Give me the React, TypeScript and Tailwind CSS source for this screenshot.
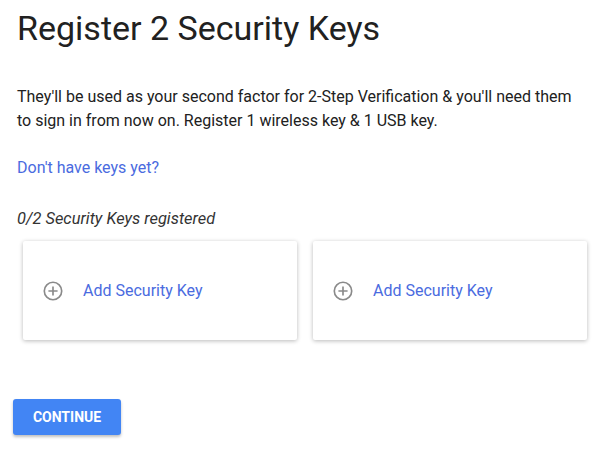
import React from "react";

function PlusCircle() {
  return (
    <svg width="22" height="22" viewBox="0 0 24 24" fill="none" stroke="#8a8a8a" strokeWidth="1.8">
      <circle cx="12" cy="12" r="9.5" />
      <path d="M12 7v10M7 12h10" />
    </svg>
  );
}

function KeyCard() {
  return (
    <button className="flex h-[99px] flex-1 items-center gap-[19px] rounded-[2px] bg-white pl-[19px] text-left shadow-[0_1px_4px_rgba(0,0,0,0.28)]">
      <PlusCircle />
      <span className="text-[16px] text-[#4a6be0]">Add Security Key</span>
    </button>
  );
}

export default function App() {
  return (
    <div className="min-h-[449px] bg-white px-[17px] font-['Roboto','Liberation_Sans',sans-serif] text-[#212121]">
      <h1 className="pt-[8px] text-[34px] leading-[40px]">Register 2 Security Keys</h1>

      <p className="mt-[37px] text-[16px] leading-[24px]">
        They'll be used as your second factor for 2-Step Verification &amp; you'll need them to sign in from now on. Register 1 wireless key &amp; 1 USB key.
      </p>

      <a href="#" className="mt-[23px] block text-[16px] leading-[24px] text-[#4a6be0]">
        Don't have keys yet?
      </a>

      <p className="mt-[27px] text-[16.4px] italic leading-[24px] text-[#333]">0/2 Security Keys registered</p>

      {/* cards */}
      <div className="mt-[10px] flex gap-[16px] pl-[6px] pr-[1px]">
        <KeyCard />
        <KeyCard />
      </div>

      <button className="-ml-[4px] mt-[59px] h-[36px] w-[108px] rounded-[3px] bg-[#4285f4] text-[14px] font-bold text-white shadow-[0_2px_3px_rgba(0,0,0,0.25)]">
        CONTINUE
      </button>
    </div>
  );
}
